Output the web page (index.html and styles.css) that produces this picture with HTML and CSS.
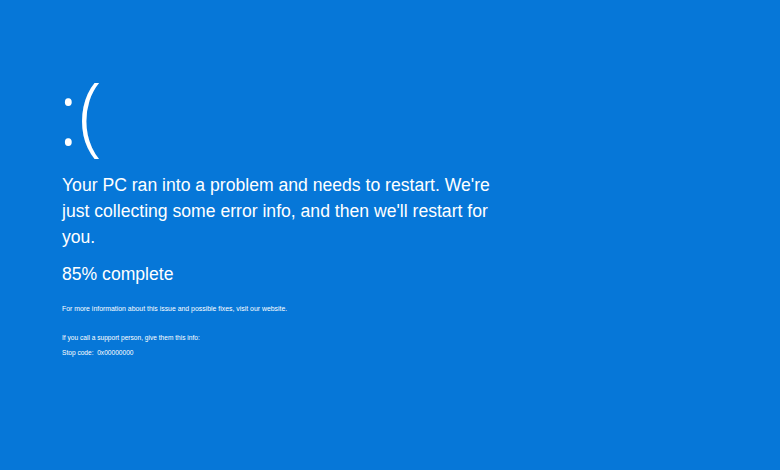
FILE: index.html
```html
<!DOCTYPE html>
<html>
<head>
<meta charset="utf-8">
<link rel="stylesheet" href="styles.css">
</head>
<body>
<main class="bsod">
  <div class="face">:(</div>
  <p class="message">Your PC ran into a problem and needs to restart. We're just collecting some error info, and then we'll restart for you.</p>
  <p class="progress">85% complete</p>
  <p class="info">For more information about this issue and possible fixes, visit our website.</p>
  <p class="support">If you call a support person, give them this info:</p>
  <p class="support code">Stop code:&nbsp; 0x00000000</p>
</main>
</body>
</html>
```

FILE: styles.css
```css
html, body {
  margin: 0;
  padding: 0;
  height: 100%;
}
body {
  background: #0677d8;
  color: #ffffff;
  font-family: "Liberation Sans", Arial, sans-serif;
}
.bsod {
  display: flex;
  flex-direction: column;
  padding: 60px 0 0 58px;
}
.face {
  font-family: "Open Sans", sans-serif;
  font-weight: 300;
  font-size: 86px;
  line-height: 104px;
  margin-bottom: 8px;
}
.message {
  margin: 0;
  font-size: 17.6px;
  line-height: 26px;
  width: 440px;
  padding-left: 4px;
}
.progress {
  margin: 12px 0 0 4px;
  font-size: 17.6px;
  line-height: 24px;
}
.info {
  margin: 18px 0 0 4px;
  font-size: 6.9px;
  line-height: 10px;
}
.support {
  margin: 19px 0 0 4px;
  font-size: 6.6px;
  line-height: 9px;
}
.support.code {
  margin-top: 6px;
}
```
